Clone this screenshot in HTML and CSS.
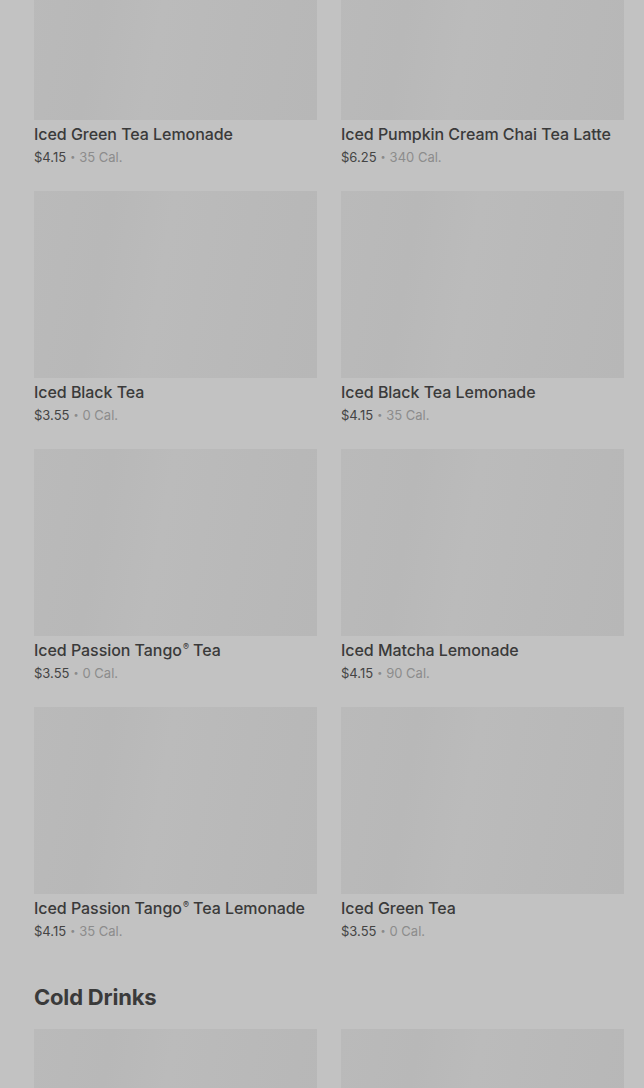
FILE: index.html
```html
<!DOCTYPE html>
<html>
<head>
<meta charset="utf-8">
<link rel="stylesheet" href="styles.css">
</head>
<body>
<main class="page">
  <section class="section">
    <div class="grid">
      <div class="card"><div class="thumb"></div><div class="info"><div class="name">Iced Green Tea Lemonade</div><div class="meta"><span class="price">$4.15</span><span class="dot">•</span><span class="cal">35 Cal.</span></div></div></div>
      <div class="card"><div class="thumb"></div><div class="info"><div class="name">Iced Pumpkin Cream Chai Tea Latte</div><div class="meta"><span class="price">$6.25</span><span class="dot">•</span><span class="cal">340 Cal.</span></div></div></div>
      <div class="card"><div class="thumb"></div><div class="info"><div class="name">Iced Black Tea</div><div class="meta"><span class="price">$3.55</span><span class="dot">•</span><span class="cal">0 Cal.</span></div></div></div>
      <div class="card"><div class="thumb"></div><div class="info"><div class="name">Iced Black Tea Lemonade</div><div class="meta"><span class="price">$4.15</span><span class="dot">•</span><span class="cal">35 Cal.</span></div></div></div>
      <div class="card"><div class="thumb"></div><div class="info"><div class="name">Iced Passion Tango<sup class="reg">®</sup> Tea</div><div class="meta"><span class="price">$3.55</span><span class="dot">•</span><span class="cal">0 Cal.</span></div></div></div>
      <div class="card"><div class="thumb"></div><div class="info"><div class="name">Iced Matcha Lemonade</div><div class="meta"><span class="price">$4.15</span><span class="dot">•</span><span class="cal">90 Cal.</span></div></div></div>
      <div class="card"><div class="thumb"></div><div class="info"><div class="name">Iced Passion Tango<sup class="reg">®</sup> Tea Lemonade</div><div class="meta"><span class="price">$4.15</span><span class="dot">•</span><span class="cal">35 Cal.</span></div></div></div>
      <div class="card"><div class="thumb"></div><div class="info"><div class="name">Iced Green Tea</div><div class="meta"><span class="price">$3.55</span><span class="dot">•</span><span class="cal">0 Cal.</span></div></div></div>
    </div>
  </section>
  <section class="section">
    <h2 class="heading">Cold Drinks</h2>
    <div class="grid">
      <div class="card"><div class="thumb"></div></div>
      <div class="card"><div class="thumb"></div></div>
    </div>
  </section>
</main>
</body>
</html>
```

FILE: styles.css
```css
html, body {
  margin: 0;
  padding: 0;
  background: #c2c2c2;
  overflow: hidden;
  height: 1088px;
}
body {
  font-family: Inter, "Liberation Sans", sans-serif;
  color: #3b3b3b;
}
.page {
  margin-top: -67px;
  padding: 0 20px 0 34px;
}
.grid {
  display: grid;
  grid-template-columns: 283px 283px;
  column-gap: 24px;
  row-gap: 0;
}
.card {
  display: flex;
  flex-direction: column;
  height: 258px;
}
.thumb {
  height: 187px;
  flex: none;
  background: linear-gradient(100deg, #bababa 0%, #b8b8b8 25%, #bbbbbb 45%, #b9b9b9 70%, #b7b7b7 100%);
}
.info {
  padding-top: 4px;
}
.name {
  font-size: 16px;
  line-height: 20px;
  font-weight: 500;
  color: #3a3a3a;
  letter-spacing: -0.05px;
}
.reg {
  font-size: 9px;
  line-height: 0;
  vertical-align: 6px;
  margin-left: 1px;
}
.meta {
  margin-top: 5px;
  font-size: 13px;
  line-height: 16px;
  display: flex;
  align-items: center;
}
.price {
  color: #444444;
}
.dot {
  color: #8a8a8a;
  font-size: 9px;
  margin: 0 4px;
}
.cal {
  color: #8c8c8c;
}
.heading {
  margin: 18px 0 18px;
  font-size: 22px;
  line-height: 28px;
  font-weight: 700;
  letter-spacing: -0.2px;
  color: #3a3a3a;
}
```
